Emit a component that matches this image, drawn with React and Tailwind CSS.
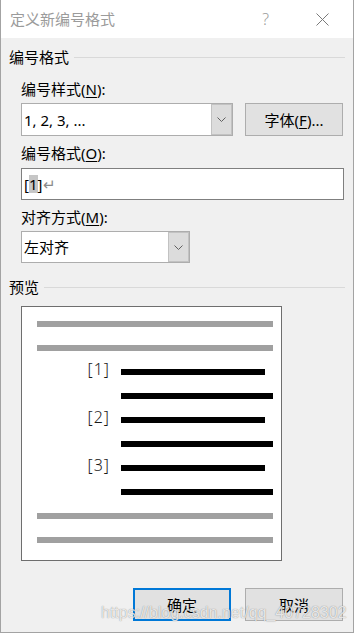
import React from 'react'

function Chevron() {
  return (
    <svg width="9" height="5" viewBox="0 0 9 5" fill="none">
      <path d="M0.5 0.5L4.5 4.5L8.5 0.5" stroke="#606060" strokeWidth="1" />
    </svg>
  )
}

function Combo({ value, className }) {
  return (
    <div className={'flex bg-white border border-[#adadad] ' + className}>
      <div className="flex-1 flex items-center pl-[2px] text-[15px] leading-[18px] text-black">{value}</div>
      <div className="w-[21px] bg-[#dcdcdc] border border-[#c2c2c2] flex items-center justify-center">
        <Chevron />
      </div>
    </div>
  )
}

function SectionHeader({ title }) {
  return (
    <div className="flex items-center h-[18px] pl-[8px] pr-[8px]">
      <span className="text-[15px] leading-[18px] text-black">{title}</span>
      <div className="flex-1 h-px bg-[#d9d9d9] ml-[5px] mt-[1px]" />
    </div>
  )
}

function Label({ text, hotkey }) {
  return (
    <div className="ml-[20px] h-[18px] text-[15px] leading-[18px] text-black">
      {text}(<span className="underline underline-offset-2">{hotkey}</span>):
    </div>
  )
}

function GrayBar() {
  return <div className="w-[236px] h-[6px] bg-[#a0a0a0]" />
}

function NumRow({ n }) {
  return (
    <>
      <div className="flex items-center h-[6px]">
        <span className="w-[73px] text-right text-[16px] leading-[16px] mb-[6px] text-[#1a1a1a] font-light tracking-[1px]">[{n}]</span>
        <div className="ml-[11px] w-[144px] h-[6px] bg-black" />
      </div>
      <div className="flex h-[6px]">
        <div className="ml-[84px] w-[152px] h-[6px] bg-black" />
      </div>
    </>
  )
}

export default function App() {
  return (
    <div className="relative w-[354px] h-[633px] flex flex-col border-x border-b border-[#a3a3a3] font-['Noto_Sans','Noto_Sans_CJK_SC',sans-serif] select-none">
      <div className="h-[38px] bg-white flex items-center pl-[9px] pr-[24px] shrink-0">
        <span className="text-[15px] leading-[18px] text-[#9b9b9b]">定义新编号格式</span>
        <div className="flex-1" />
        <span className="text-[16px] leading-[18px] text-[#9b9b9b] font-light">?</span>
        <svg className="ml-[47px]" width="13" height="13" viewBox="0 0 13 13" fill="none">
          <path d="M0.5 0.5L12.5 12.5M12.5 0.5L0.5 12.5" stroke="#7a7a7a" strokeWidth="1" />
        </svg>
      </div>

      <div className="flex-1 bg-[#f0f0f0] flex flex-col pt-[10px]">
        <SectionHeader title="编号格式" />

        <div className="mt-[14px]">
          <Label text="编号样式" hotkey="N" />
        </div>
        <div className="mt-[5px] ml-[20px] flex gap-[12px]">
          <Combo value="1, 2, 3, ..." className="w-[212px] h-[33px]" />
          <button className="w-[98px] h-[33px] bg-[#e1e1e1] border border-[#adadad] text-[15px] leading-[18px] text-black">
            字体(<span className="underline underline-offset-2">F</span>)...
          </button>
        </div>

        <div className="mt-[8px]">
          <Label text="编号格式" hotkey="O" />
        </div>
        <div className="mt-[6px] ml-[20px] w-[323px] h-[32px] bg-white border border-[#7f7f7f] flex items-center pl-[2px] text-[15px] leading-[18px] text-black">
          <span>[</span>
          <span className="bg-[#c6c6c6]">1</span>
          <span>]</span>
          <span className="text-[#8a8a8a] ml-[1px]">↵</span>
        </div>

        <div className="mt-[8px]">
          <Label text="对齐方式" hotkey="M" />
        </div>
        <div className="mt-[5px] ml-[20px]">
          <Combo value="左对齐" className="w-[169px] h-[32px]" />
        </div>

        <div className="mt-[15px]">
          <SectionHeader title="预览" />
        </div>

        <div className="mt-[10px] ml-[20px] w-[261px] h-[255px] bg-white border border-[#6e6e6e] pt-[14px] pl-[15px] flex flex-col gap-[18px]">
          <GrayBar />
          <GrayBar />
          <NumRow n={1} />
          <NumRow n={2} />
          <NumRow n={3} />
          <GrayBar />
          <GrayBar />
        </div>

        <div className="mt-[27px] flex justify-end gap-[14px] pr-[10px]">
          <button className="w-[98px] h-[33px] bg-[#e1e1e1] border-2 border-[#0078d7] text-[15px] leading-[18px] text-black">
            确定
          </button>
          <button className="w-[98px] h-[33px] bg-[#e1e1e1] border border-[#adadad] text-[15px] leading-[18px] text-black">
            取消
          </button>
        </div>
      </div>

      <div className="absolute left-[100px] top-[604px] text-[16px] leading-[18px] font-['Liberation_Sans',Arial,sans-serif] text-white/80 [text-shadow:0_0_1px_rgba(0,0,0,0.5)] pointer-events-none whitespace-nowrap">
        https://blog.csdn.net/qq_40728302
      </div>
    </div>
  )
}
